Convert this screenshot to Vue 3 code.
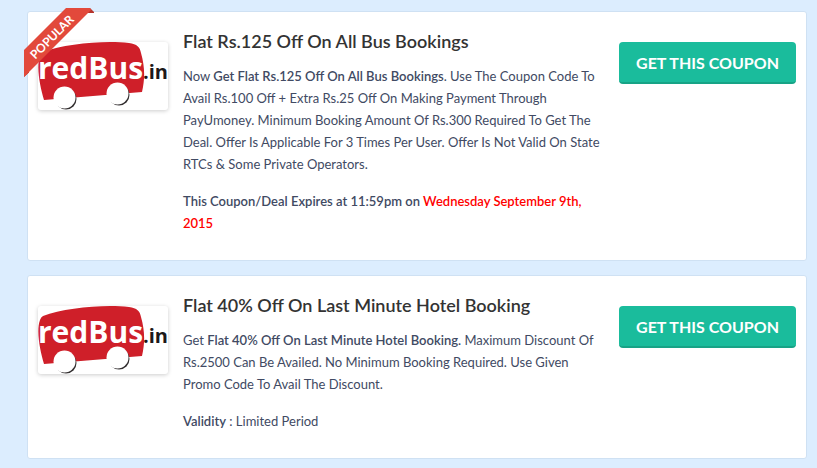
<script setup>
const coupons = [
  {
    id: 'bus',
    popular: true,
    title: 'Flat Rs.125 Off On All Bus Bookings',
    lead: 'Now',
    highlight: 'Get Flat Rs.125 Off On All Bus Bookings',
    rest: '. Use The Coupon Code To Avail Rs.100 Off + Extra Rs.25 Off On Making Payment Through PayUmoney. Minimum Booking Amount Of Rs.300 Required To Get The Deal. Offer Is Applicable For 3 Times Per User. Offer Is Not Valid On State RTCs & Some Private Operators.',
    expires: 'Wednesday September 9th, 2015',
  },
  {
    id: 'hotel',
    popular: false,
    title: 'Flat 40% Off On Last Minute Hotel Booking',
    lead: 'Get',
    highlight: 'Flat 40% Off On Last Minute Hotel Booking.',
    rest: ' Maximum Discount Of Rs.2500 Can Be Availed. No Minimum Booking Required. Use Given Promo Code To Avail The Discount.',
    validity: 'Limited Period',
  },
]
</script>

<template>
  <main class="coupons">
    <article v-for="c in coupons" :key="c.id" class="coupon">
      <svg class="logo" width="130" height="68" viewBox="0 0 130 68" role="img" aria-label="redBus.in">
        <path d="M5 10C26 2 66-2 91 1C99 2 102 5 103 11C107 25 107 37 104 50L6 58C2 44-2 25 2 14Q3 11 5 10Z" fill="#cf1f29" />
        <circle cx="28" cy="57" r="10.500" fill="#332f30" />
        <circle cx="26.500" cy="55.500" r="11" fill="#fff" />
        <circle cx="81" cy="53" r="10.500" fill="#332f30" />
        <circle cx="79.500" cy="51.500" r="11" fill="#fff" />
        <text class="logo-name" x="0" y="37">redBus</text>
        <text class="logo-domain" x="105" y="37">.in</text>
      </svg>
      <svg v-if="c.popular" class="ribbon" width="70" height="70" viewBox="0 0 70 70">
        <path d="M64 5H70V4L66 0H60ZM0 63H5V64.500L0 69Z" fill="#b5342b" />
        <path d="M0 42 42 0H66L67 2 2 67 0 69Z" fill="#e2493b" />
        <text class="ribbon-text" transform="translate(31 32) rotate(-45)" text-anchor="middle">POPULAR</text>
      </svg>
      <div class="details">
        <h2>{{ c.title }}</h2>
        <p>{{ c.lead }} <strong>{{ c.highlight }}</strong>{{ c.rest }}</p>
        <p v-if="c.expires">
          <strong>This Coupon/Deal Expires at 11:59pm on <span class="date">{{ c.expires }}</span></strong>
        </p>
        <p v-if="c.validity"><strong>Validity</strong> : {{ c.validity }}</p>
      </div>
      <button type="button" class="get">GET THIS COUPON</button>
    </article>
  </main>
</template>

<style>
body {
  margin: 0;
  background: #dcedfe;
}
</style>

<style scoped>
.coupons {
  display: flex;
  flex-direction: column;
  gap: 14px;
  padding: 11px 10px 9px 27px;
  font-family: Lato, "Liberation Sans", sans-serif;
  font-size: 13px;
  line-height: 22px;
  color: #414a63;
}
.coupon {
  position: relative;
  display: flex;
  align-items: flex-start;
  gap: 15px;
  padding: 18px 10px 26px;
  background: #fff;
  border: 1px solid #cfe1f3;
  border-radius: 3px;
}
.ribbon {
  position: absolute;
  top: -4px;
  left: -4px;
}
.ribbon-text {
  font-size: 12px;
  font-weight: 700;
  fill: #fff;
}
.logo {
  flex: none;
  margin-top: 12px;
  border-radius: 3px;
  box-shadow: 0 1px 4px rgba(0, 0, 0, 0.2);
}
.logo-name,
.logo-domain {
  font-family: "Open Sans", "Noto Sans", sans-serif;
  font-weight: 700;
}
.logo-name {
  font-size: 30px;
  fill: #fff;
}
.logo-domain {
  font-size: 20px;
  fill: #1c1819;
}
.details {
  flex: 1;
  min-width: 0;
}
h2 {
  margin: 0 0 13px;
  font-size: 18px;
  font-weight: 600;
  line-height: 22px;
  color: #333;
}
p {
  margin: 0 0 15px;
}
p:last-child {
  margin-bottom: 0;
}
strong {
  font-weight: 600;
}
.date {
  color: #ff0000;
}
.get {
  flex: none;
  margin-top: 12px;
  padding: 10px 17px 8px;
  border: 0;
  border-bottom: 2px solid #17a386;
  border-radius: 4px;
  background: #1abc9c;
  color: #fff;
  font-family: inherit;
  font-size: 16px;
  font-weight: 700;
  line-height: 22px;
  cursor: pointer;
}
</style>
